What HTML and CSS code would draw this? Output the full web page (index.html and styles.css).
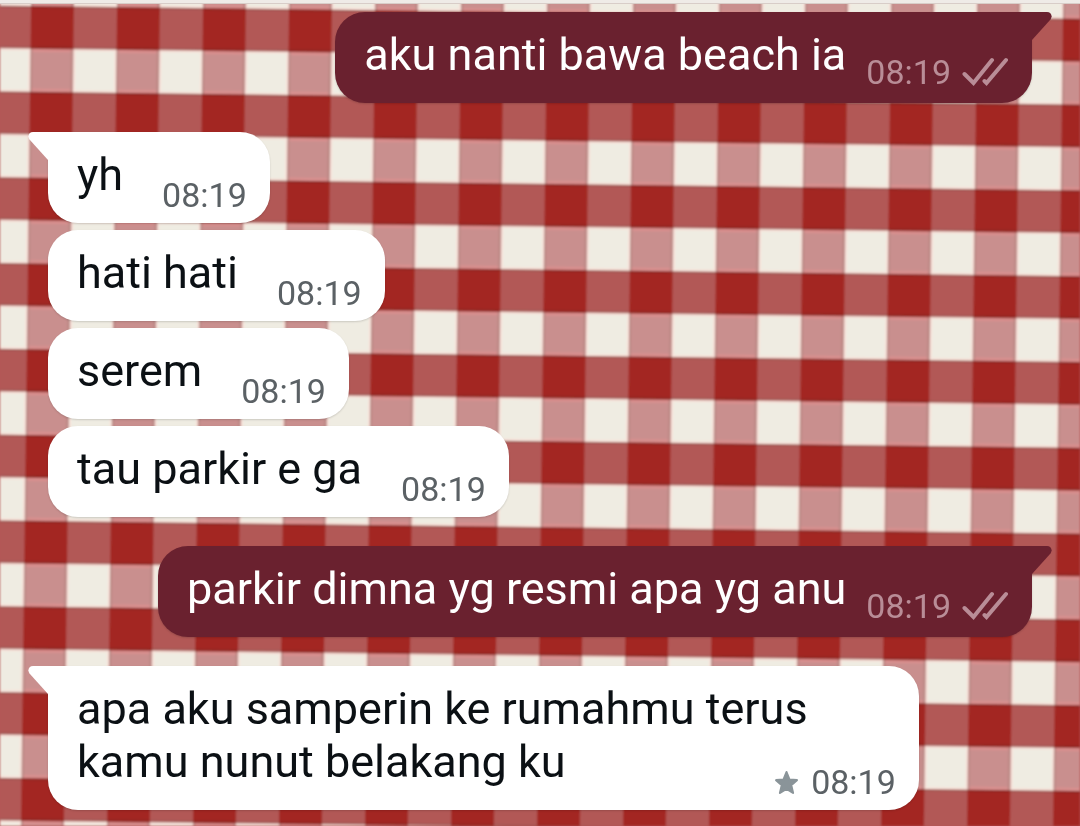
FILE: index.html
```html
<!DOCTYPE html>
<html lang="id">

<head>
    <meta charset="UTF-8">
    <meta name="viewport" content="width=device-width, initial-scale=1.0">
    <title>Chat</title>
    <link rel="stylesheet" href="styles.css">
</head>

<body>
    <!-- Gingham wallpaper -->
    <svg class="wallpaper" aria-hidden="true">
        <defs>
            <pattern id="gingham" width="86" height="85.8" patternUnits="userSpaceOnUse"
                patternTransform="translate(31 6) rotate(0.7)">
                <rect width="86" height="85.8" fill="#efece2" />
                <rect width="42.9" height="85.8" fill="#c98f8e" />
                <rect width="86" height="42.4" fill="#b25857" />
                <rect width="42.9" height="42.4" fill="#a32823" />
                <!-- woven edges -->
                <rect x="0" y="0" width="42.9" height="2" fill="#8f2823" />
                <rect x="0" y="40.4" width="42.9" height="2" fill="#8f2823" />
                <rect x="42.9" y="0" width="43.1" height="2" fill="#a05450" />
                <rect x="42.9" y="40.4" width="43.1" height="2" fill="#a05450" />
                <rect x="0" y="43" width="42.9" height="3" fill="#d98f8e" />
                <rect x="0" y="82.5" width="42.9" height="3" fill="#d98f8e" />
                <rect x="0" y="43" width="2" height="42.8" fill="#b98783" />
                <rect x="40.5" y="43" width="2" height="42.8" fill="#b98783" />
                <rect x="44" y="43.6" width="41" height="41" fill="none" stroke="#f8e2da" stroke-width="2" />
            </pattern>
            <filter id="soft" x="0" y="0" width="100%" height="100%">
                <feGaussianBlur stdDeviation="0.8" />
            </filter>
        </defs>
        <rect width="100%" height="100%" fill="url(#gingham)" filter="url(#soft)" />
    </svg>

    <!-- Shared icons -->
    <svg class="symbols" aria-hidden="true">
        <symbol id="tail" viewBox="0 0 22 28">
            <path d="M22 0H5C1 0-1 4 1.500 7.500L20 28H22Z" />
        </symbol>
        <symbol id="checks" viewBox="0 0 46 30">
            <path d="M2.500 17L11.500 26L30 3M22.500 24L24.500 26L44 3" fill="none" stroke="currentColor" stroke-width="4"
                stroke-linecap="round" />
        </symbol>
        <symbol id="star" viewBox="0 0 24 24">
            <path d="M12 2L14.800 9.100L22 9.700L16.500 14.500L18.300 22L12 18L5.700 22L7.500 14.500L2 9.700L9.200 9.100Z"
                fill="currentColor" stroke="currentColor" stroke-width="2" stroke-linejoin="round" />
        </symbol>
    </svg>

    <header class="top-bar"></header>

    <main class="chat">
        <section class="group sent">
            <div class="bubble">
                <svg class="tail"><use href="#tail" /></svg>
                <p class="text">aku nanti bawa beach ia</p>
                <div class="meta">
                    <time>08:19</time>
                    <svg class="checks" role="img" aria-label="Terkirim"><use href="#checks" /></svg>
                </div>
            </div>
        </section>

        <section class="group received">
            <div class="bubble">
                <svg class="tail"><use href="#tail" /></svg>
                <p class="text">yh</p>
                <div class="meta"><time>08:19</time></div>
            </div>
            <div class="bubble">
                <p class="text">hati hati</p>
                <div class="meta"><time>08:19</time></div>
            </div>
            <div class="bubble">
                <p class="text">serem</p>
                <div class="meta"><time>08:19</time></div>
            </div>
            <div class="bubble">
                <p class="text">tau parkir e ga</p>
                <div class="meta"><time>08:19</time></div>
            </div>
        </section>

        <section class="group sent">
            <div class="bubble">
                <svg class="tail"><use href="#tail" /></svg>
                <p class="text">parkir dimna yg resmi apa yg anu</p>
                <div class="meta">
                    <time>08:19</time>
                    <svg class="checks" role="img" aria-label="Terkirim"><use href="#checks" /></svg>
                </div>
            </div>
        </section>

        <section class="group received">
            <div class="bubble long">
                <svg class="tail"><use href="#tail" /></svg>
                <p class="text">apa aku samperin ke rumahmu terus kamu nunut belakang ku</p>
                <div class="meta">
                    <svg class="star" role="img" aria-label="Berbintang"><use href="#star" /></svg>
                    <time>08:19</time>
                </div>
            </div>
        </section>
    </main>
</body>

</html>
```
FILE: styles.css
```css
/* Body element styles */
body {
    font-family: Roboto, 'Liberation Sans', sans-serif;
    background-color: #b35655;
    margin: 0;
}

/* Wallpaper behind the chat */
.wallpaper {
    position: fixed;
    top: 0;
    left: 0;
    width: 100%;
    height: 100%;
    z-index: -1;
}

.symbols {
    position: absolute;
    width: 0;
    height: 0;
}

/* Bottom edge of the header */
.top-bar {
    height: 3px;
    background-color: #efebe7;
    border-bottom: 1px solid #d8cdc8;
}

/* Message list */
.chat {
    display: flex;
    flex-direction: column;
    gap: 29px;
    padding: 8px 48px 16px;
}

.group {
    display: flex;
    flex-direction: column;
    gap: 7px;
}

.received {
    align-items: flex-start;
}

.sent {
    align-items: flex-end;
}

/* Message bubble */
.bubble {
    position: relative;
    display: flex;
    box-sizing: border-box;
    border-radius: 30px;
    box-shadow: 0 1px 2px rgba(0, 0, 0, 0.15);
}

.received .bubble {
    gap: 39px;
    max-width: 88.5%;
    padding: 16px 23px 8px 29px;
    background-color: #ffffff;
    color: #0b1014;
}

.sent .bubble {
    gap: 20px;
    max-width: 90%;
    padding: 16px 24px 11px 29px;
    background-color: #6a212f;
    color: #ffffff;
}

/* The time sits in the same cell, under the end of the text */
.received .long {
    display: grid;
}

.long .text,
.long .meta {
    grid-area: 1 / 1;
}

.long .meta {
    justify-self: end;
}

/* Bubble tail */
.tail {
    position: absolute;
    top: 0;
    width: 22px;
    height: 28px;
}

.received .tail {
    left: -20px;
    fill: #ffffff;
}

.sent .tail {
    right: -20px;
    fill: #6a212f;
    transform: scaleX(-1);
}

.received .bubble:has(.tail) {
    border-top-left-radius: 0;
}

.sent .bubble:has(.tail) {
    border-top-right-radius: 0;
}

.text {
    margin: 0;
    font-size: 45px;
    line-height: 53px;
}

.received .text {
    padding-bottom: 14px;
}

.sent .text {
    padding-bottom: 11px;
}

/* Time and status icons */
.meta {
    display: flex;
    align-items: center;
    align-self: flex-end;
    font-size: 34px;
    line-height: 40px;
}

.received .meta {
    gap: 12px;
    color: #5b6165;
}

.sent .meta {
    gap: 11px;
    color: #b98d97;
}

.checks {
    width: 46px;
    height: 30px;
}

.star {
    width: 25px;
    height: 25px;
    color: #8a9499;
}
```
